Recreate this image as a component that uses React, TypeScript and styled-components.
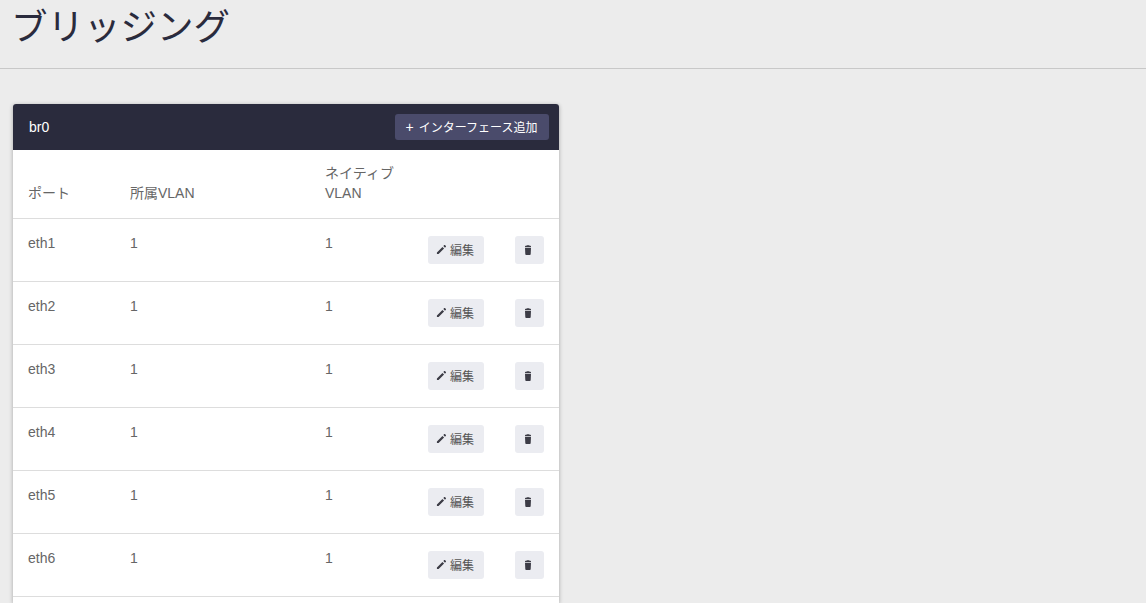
import React from "react";
import styled, { createGlobalStyle } from "styled-components";

const Global = createGlobalStyle`
  html, body { margin: 0; padding: 0; height: 100%; overflow: hidden; background: #ececec; }
  body { font-family: "Liberation Sans", "Noto Sans CJK JP", sans-serif; font-size: 14px; color: #666; }
`;
const PageHeader = styled.header`
  height: 68px; border-bottom: 1px solid #c8c8c8; padding: 0 11px;
`;
const Title = styled.h1`
  margin: 0; padding-top: 5px; font-size: 36.5px; line-height: 46px; font-weight: 400; color: #2a2b3d;
`;
const Content = styled.main`
  padding: 35px 13px 0;
`;
const Card = styled.section`
  width: 546px; padding-bottom: 6px; background: #fff; border-radius: 3px 3px 0 0; box-shadow: 0 1px 4px rgba(0,0,0,.3);
`;
const CardHeader = styled.div`
  height: 46px; background: #2a2b3d; border-radius: 3px 3px 0 0; display: flex; align-items: center;
  justify-content: space-between; padding: 0 10px 0 16px; color: #fff;
`;
const CardTitle = styled.span`font-size: 14px; color: #fff;`;
const AddButton = styled.button`
  width: 154px; height: 26px; padding: 0 1px 1px 0; border: 0; border-radius: 3px; background: #4a4b6b; color: #fff;
  font: inherit; font-size: 12px; display: flex; align-items: center; justify-content: center; gap: 5px;
`;
const Plus = styled.span`font-size: 14px; line-height: 1;`;
const Table = styled.table`
  width: 546px; border-collapse: collapse; table-layout: fixed;
`;
const HeadCell = styled.th<{ $w: number }>`
  width: ${p => p.$w}px; height: 68px; box-sizing: border-box; padding: 0 15px 15px; text-align: left;
  vertical-align: bottom; font-weight: 400; font-size: 14px; line-height: 20px; color: #666;
  border-bottom: 1px solid #ddd;
`;
const Row = styled.tr`
  height: 63px; border-bottom: 1px solid #ddd;
`;
const Cell = styled.td`
  padding: 14px 15px 0; vertical-align: top; font-size: 14px; line-height: 20px; color: #666;
`;
const ActionCell = styled.td`
  padding: 17px 15px 0; vertical-align: top;
`;
const SoftButton = styled.button<{ $w: number }>`
  width: ${p => p.$w}px; height: 28px; padding: 0 2px 0 0; border: 0; border-radius: 3px; background: #ebecf1;
  color: #555; font: inherit; font-size: 12px; display: flex; align-items: center; justify-content: center; gap: 3px;
`;
const IconButton = styled(SoftButton)`padding: 0 3px 0 0;`;
const Glyph = styled.svg<{ $size: number }>`width: ${p => p.$size}px; height: ${p => p.$size}px; fill: #3c3c46; flex: none;`;

const Pencil = () => (
  <Glyph $size={11} viewBox="0 0 12 12"><path d="M1 9.200V11h1.800l6-6L7 3.200zM9.800 4l1-1a.6.6 0 0 0 0-.8l-1-1a.6.6 0 0 0-.8 0l-1 1z" /></Glyph>
);
const Trash = () => (
  <Glyph $size={12} viewBox="0 0 12 12"><path d="M4.800 1.200h2.400l.3.600h.9q.6 0 .6.600v.7H3v-.7q0-.6.600-.6h.9zM3 3.800h6l-.3 6.400q-.1.800-.9.800H4.200q-.8 0-.9-.8z" /></Glyph>
);

const ports = ["eth1", "eth2", "eth3", "eth4", "eth5", "eth6"];

export default function App() {
  return (
    <>
      <Global />
      <PageHeader><Title>ブリッジング</Title></PageHeader>
      <Content>
        <Card>
          <CardHeader>
            <CardTitle>br0</CardTitle>
            <AddButton><Plus>+</Plus><span>インターフェース追加</span></AddButton>
          </CardHeader>
          <Table>
            <thead>
              <tr>
                <HeadCell $w={102}>ポート</HeadCell>
                <HeadCell $w={195}>所属VLAN</HeadCell>
                <HeadCell $w={103}>ネイティブ<br />VLAN</HeadCell>
                <HeadCell $w={87} />
                <HeadCell $w={59} />
              </tr>
            </thead>
            <tbody>
              {ports.map(p => (
                <Row key={p}>
                  <Cell>{p}</Cell>
                  <Cell>1</Cell>
                  <Cell>1</Cell>
                  <ActionCell><SoftButton $w={56}><Pencil />編集</SoftButton></ActionCell>
                  <ActionCell><IconButton $w={29}><Trash /></IconButton></ActionCell>
                </Row>
              ))}
            </tbody>
          </Table>
        </Card>
      </Content>
    </>
  );
}
